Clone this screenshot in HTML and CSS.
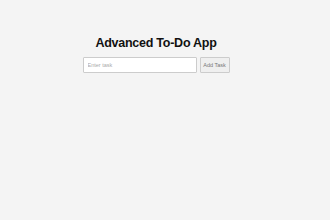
FILE: index.html
```html
<!DOCTYPE html>
<html lang="en">
<head>
    <meta charset="UTF-8">
    <meta name="viewport" content="width=device-width, initial-scale=1.0">
    <title>Advanced To-Do App</title>
    <link rel="stylesheet" href="styles.css">
</head>
<body>
    <div class="container">
        <h1>Advanced To-Do App</h1>
        <div class="task-input">
            <input type="text" id="taskInput" class="input-field" placeholder="Enter task">
            <button class="btn" id="addTask">Add Task</button>
        </div>
        <ul id="taskList"></ul>
    </div>
</body>
</html>
```

FILE: styles.css
```css
body {
    font-family: "Liberation Sans", Arial, sans-serif;
    background-color: #f4f4f4;
    margin: 0;
    padding: 0 18px 0 0;
}
.container {
    width: 160px;
    margin: 0 auto;
    padding-top: 36px;
    text-align: center;
}
.container h1 {
    font-size: 12.5px;
    letter-spacing: -0.25px;
    color: #111;
    margin: 0 0 7px 0;
}
.task-input {
    display: flex;
    justify-content: center;
    gap: 3px;
}
.input-field {
    width: 114px;
    height: 16px;
    box-sizing: border-box;
    padding: 0 4px;
    font-size: 5.5px;
    font-family: inherit;
    border: 1px solid #ccc;
    border-radius: 1px;
    background: white;
}
.input-field::placeholder {
    color: #aaa;
}
.btn {
    width: 30px;
    height: 16px;
    box-sizing: border-box;
    padding: 0;
    font-size: 5.5px;
    font-family: inherit;
    color: #777;
    background-color: #efefef;
    border: 1px solid #ccc;
    border-radius: 1px;
    cursor: pointer;
}
#taskList {
    list-style: none;
    padding: 0;
    margin: 0;
}
```
